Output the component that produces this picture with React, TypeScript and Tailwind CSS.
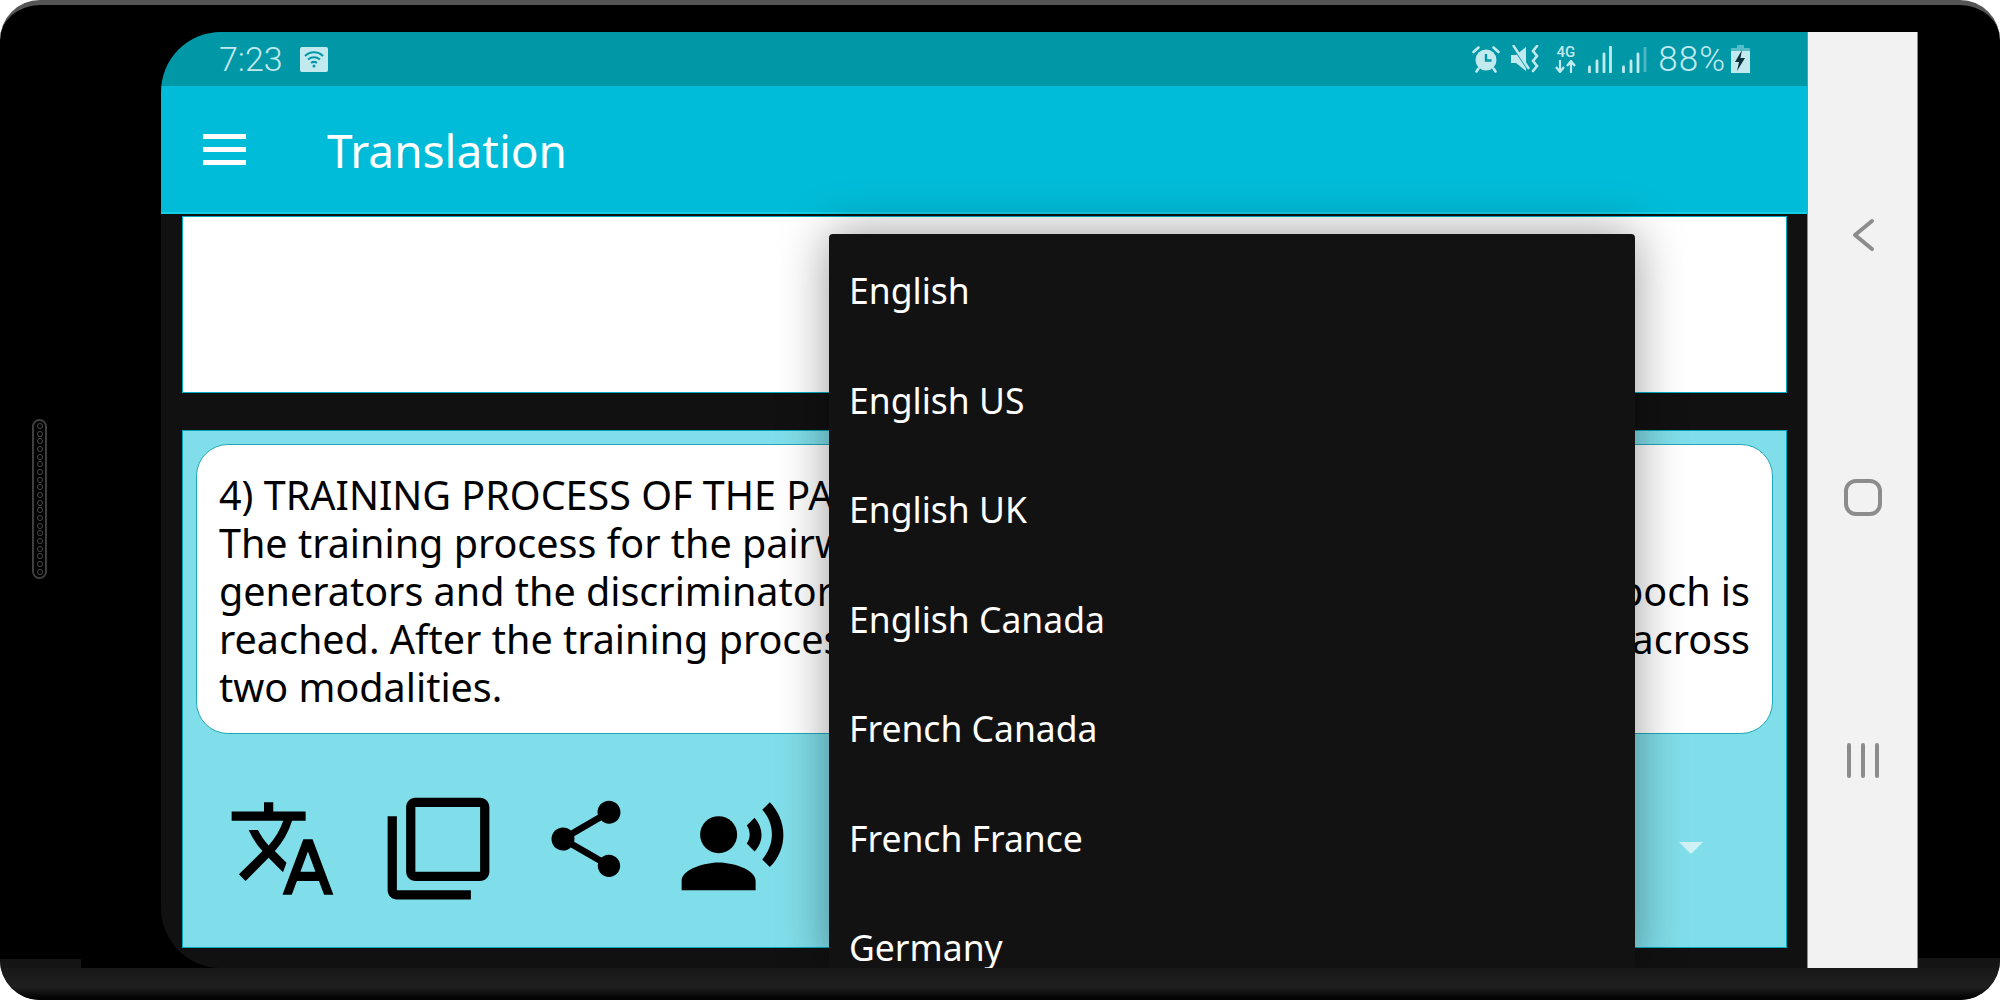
import React from "react";
import { MdTranslate, MdFilterNone, MdShare, MdRecordVoiceOver } from "react-icons/md";

const languages = [
  "English",
  "English US",
  "English UK",
  "English Canada",
  "French Canada",
  "French France",
  "Germany",
];

const holes = Array.from({ length: 20 }, (_, i) => i);

const StatusIcons = () => (
  <div className="flex items-center text-[#c2e9ee]">
    {/* alarm */}
    <svg width="28" height="28" viewBox="0 0 28 28" className="mr-[11px]">
      <circle cx="14" cy="15" r="10.5" fill="#c2e9ee" />
      <path d="M14 9v6.5h5.5" stroke="#0097a7" strokeWidth="2.4" fill="none" />
      <path d="M1.5 7 6.5 2.5M26.5 7 21.5 2.5M6.5 23.5 4.5 26.5M21.5 23.5 23.5 26.5" stroke="#c2e9ee" strokeWidth="2.6" strokeLinecap="round" />
    </svg>
    {/* muted with vibrate */}
    <svg width="28" height="28" viewBox="0 0 28 28" className="mr-[16px]">
      <path d="M0 10h5l10-8v24L5 18H0z" fill="#c2e9ee" />
      <path d="M2 2 18 26" stroke="#0097a7" strokeWidth="2" />
      <path d="M2 0 18 24" stroke="#c2e9ee" strokeWidth="2.4" />
      <path d="M26 1 22 6l4 5-4 5 4 5-4 5" stroke="#c2e9ee" strokeWidth="2.6" fill="none" strokeLinecap="round" />
    </svg>
    {/* 4G */}
    <div className="mr-[12px] flex w-[21px] flex-col items-center">
      <span className="text-[15px] leading-[15px] font-medium font-['Roboto',sans-serif]">4G</span>
      <svg width="21" height="13" viewBox="0 0 21 13">
        <path d="M5 0v11M1 7l4 5 4-5M16 13V2M12 6l4-5 4 5" stroke="#c2e9ee" strokeWidth="2.2" fill="none" />
      </svg>
    </div>
    {/* signal */}
    <svg width="24" height="27" viewBox="0 0 24 27" className="mr-[10px]">
      <path d="M1.500 26v-5M9 26V15M16 26V8M22.500 26V1" stroke="#c2e9ee" strokeWidth="2.8" strokeLinecap="round" />
    </svg>
    <svg width="25" height="27" viewBox="0 0 25 27" className="mr-[11px]">
      <path d="M1.500 26v-5M9 26V15M16 26V8" stroke="#c2e9ee" strokeWidth="2.8" strokeLinecap="round" />
      <path d="M23 26V1" stroke="#c2e9ee" strokeOpacity="0.4" strokeWidth="2.8" />
    </svg>
    <span className="mr-[5px] text-[35px] leading-none font-light tracking-[1px] font-['Roboto',sans-serif]">88%</span>
    {/* battery */}
    <svg width="19" height="28" viewBox="0 0 19 28">
      <path d="M6 0h7v3H6zM0 3h19v3H0z" fill="#c2e9ee" fillOpacity="0.45" />
      <path d="M0 6h19v22H0z" fill="#c2e9ee" />
      <path d="M11 5 4 17h4l-2 9 8-13H9.500z" fill="#10323a" />
    </svg>
  </div>
);

const App = () => {
  return (
    <div className="h-[1000px] w-[2000px] overflow-hidden bg-white">
      <div className="relative flex h-[1000px] w-[2000px] flex-col overflow-hidden rounded-[40px] border-t-[5px] border-[#555555] bg-black">
        {/* speaker grille */}
        <div className="absolute left-[32px] top-[414px] flex h-[160px] w-[15px] flex-col items-center justify-between rounded-full border-2 border-[#3f3f3f] py-[2px]">
          {holes.map((i) => (
            <div key={i} className="h-[6px] w-[6px] rounded-full border border-[#4a4a4a]" />
          ))}
        </div>

        {/* small raised parts of the bottom edge, either side of the screen */}
        <div className="absolute top-[954px] left-0 h-[9px] w-[81px] bg-[#141414]" />
        <div className="absolute top-[953px] right-0 h-[10px] w-[82px] bg-[#141414]" />

        <div className="flex h-[963px] shrink-0 pt-[27px] pl-[161px]">
          <div className="relative flex h-[936px] w-[1757px] overflow-hidden rounded-l-[60px]">
            <div className="relative flex w-[1646px] flex-col bg-[#111111]">
              <div className="flex h-[54px] shrink-0 items-center justify-between bg-[#0097a7] pr-[57px] pl-[58px]">
                <div className="flex items-center gap-[17px]">
                  <span className="text-[34px] leading-none font-light text-[#c2e9ee] font-['Roboto',sans-serif]">7:23</span>
                  <div className="flex h-[25px] w-[28px] items-center justify-center rounded-[2px] bg-[#c2e9ee]">
                    <svg width="20" height="18" viewBox="0 0 20 18" fill="none" stroke="#0097a7" strokeWidth="2">
                      <path d="M1 6c5-5 13-5 18 0M4 9.500c3.500-3 8.500-3 12 0M7 13c2-1.500 4-1.500 6 0" />
                      <circle cx="10" cy="16" r="1.500" fill="#0097a7" stroke="none" />
                    </svg>
                  </div>
                </div>
                <StatusIcons />
              </div>

              <div className="flex h-[128px] shrink-0 items-center border-b-2 border-[#12cfe6] bg-[#00bcd8] pl-[42px]">
                <div className="flex w-[43px] flex-col gap-[8px]">
                  <div className="h-[5px] bg-white" />
                  <div className="h-[5px] bg-white" />
                  <div className="h-[5px] bg-white" />
                </div>
                <span className="ml-[81px] pt-[2px] text-[46px] leading-none text-white font-['Noto_Sans',sans-serif]">Translation</span>
              </div>

              <div className="mt-[2px] mr-[20px] ml-[21px] h-[177px] shrink-0 border border-[#00acc1] bg-white" />

              <div className="mt-[37px] mr-[20px] ml-[21px] flex h-[518px] shrink-0 flex-col border border-[#00a5b8] bg-[#80deea] px-[13px] pt-[13px]">
                <div className="h-[290px] shrink-0 rounded-[32px] border border-[#1fa8b8] bg-white px-[22px] pt-[26px] text-[39.5px] leading-[48px] text-black font-['Noto_Sans',sans-serif]">
                  <p className="whitespace-nowrap">4) TRAINING PROCESS OF THE PAIR</p>
                  <p className="whitespace-nowrap">The training process for the pairwise</p>
                  <p className="flex justify-between whitespace-nowrap">
                    <span>generators and the discriminators</span>
                    <span>epoch is</span>
                  </p>
                  <p className="flex justify-between whitespace-nowrap">
                    <span>reached. After the training process</span>
                    <span>across</span>
                  </p>
                  <p className="whitespace-nowrap">two modalities.</p>
                </div>

                <div className="flex items-start pt-[59px] pl-[31px] text-black">
                  <MdTranslate size={111} />
                  <MdFilterNone size={111} className="ml-[45px]" />
                  <MdShare size={92} className="ml-[46px]" />
                  <MdRecordVoiceOver size={111} className="ml-[45px]" />
                  <div className="mt-[49px] mr-[70px] ml-auto h-0 w-0 border-x-[12px] border-t-[12px] border-x-transparent border-t-[#d0f1f6]" />
                </div>
              </div>

              {/* open language menu */}
              <div className="absolute top-[202px] left-[668px] h-[734px] w-[806px] overflow-hidden rounded-[4px] bg-[#121212] pt-[2px] shadow-[0_0_50px_rgba(0,0,0,0.4)]">
                {languages.map((lang) => (
                  <div key={lang} className="flex h-[109.5px] items-center pl-[20px] text-[35.5px] text-white font-['Noto_Sans',sans-serif]">
                    {lang}
                  </div>
                ))}
              </div>
            </div>

            <div className="flex w-[111px] flex-col items-center border-x border-[#8a8a8a] bg-[#f2f2f2] pt-[186px]">
              <svg width="24" height="34" viewBox="0 0 24 34" fill="none" stroke="#8c8c8c" strokeWidth="4" strokeLinecap="round" strokeLinejoin="round">
                <path d="M21 3 4 17l17 14" />
              </svg>
              <div className="mt-[227px] h-[37px] w-[38px] rounded-[12px] border-[4px] border-[#8c8c8c]" />
              <div className="mt-[227px] flex gap-[10px]">
                <div className="h-[35px] w-[4px] rounded-full bg-[#8c8c8c]" />
                <div className="h-[35px] w-[4px] rounded-full bg-[#8c8c8c]" />
                <div className="h-[35px] w-[4px] rounded-full bg-[#8c8c8c]" />
              </div>
            </div>
          </div>
        </div>

        <div className="h-[32px] w-full bg-gradient-to-b from-[#181818] via-[#202020] via-60% to-[#020202]" />
      </div>
    </div>
  );
};

export default App;
